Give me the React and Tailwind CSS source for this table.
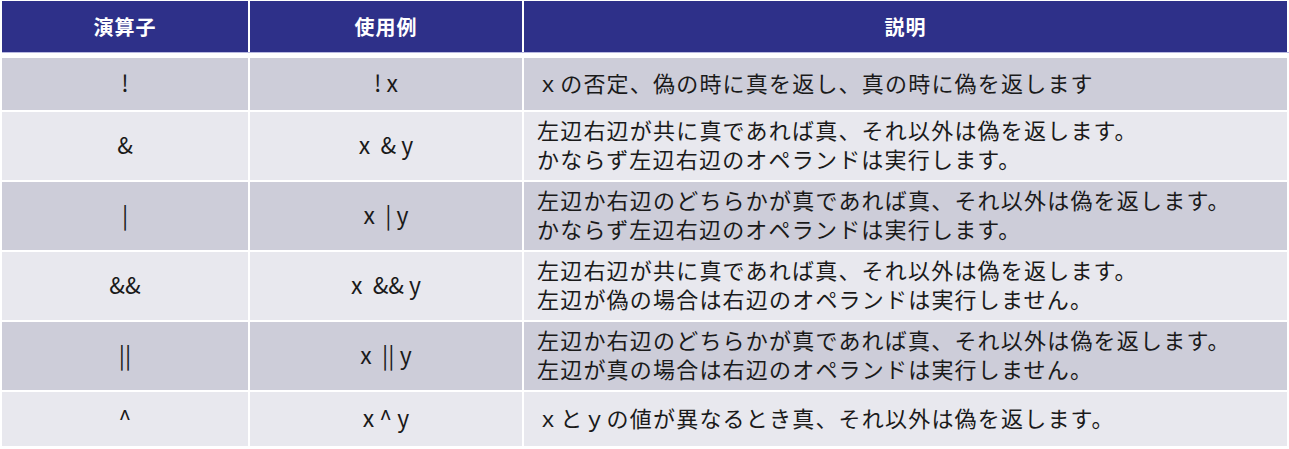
import React from "react";

const rows = [
  { op: "!", ex: "! x", desc: ["ｘの否定、偽の時に真を返し、真の時に偽を返します"], h: "h-[52px]" },
  {
    op: "&",
    ex: "x\u00a0\u00a0& y",
    desc: ["左辺右辺が共に真であれば真、それ以外は偽を返します。", "かならず左辺右辺のオペランドは実行します。"],
    h: "h-[68px]",
  },
  {
    op: "|",
    ex: "x\u00a0\u00a0| y",
    desc: ["左辺か右辺のどちらかが真であれば真、それ以外は偽を返します。", "かならず左辺右辺のオペランドは実行します。"],
    h: "h-[68px]",
  },
  {
    op: "&&",
    ex: "x\u00a0\u00a0&& y",
    desc: ["左辺右辺が共に真であれば真、それ以外は偽を返します。", "左辺が偽の場合は右辺のオペランドは実行しません。"],
    h: "h-[68px]",
  },
  {
    op: "||",
    ex: "x\u00a0\u00a0|| y",
    desc: ["左辺か右辺のどちらかが真であれば真、それ以外は偽を返します。", "左辺が真の場合は右辺のオペランドは実行しません。"],
    h: "h-[68px]",
  },
  { op: "^", ex: "x ^ y", desc: ["ｘとｙの値が異なるとき真、それ以外は偽を返します。"], h: "h-[54px]" },
];

export default function App() {
  return (
    <div
      className="w-[1289px] h-[449px] bg-white pt-[1px] pl-[2px] text-[#1a1a1a]"
      style={{ fontFamily: '"Noto Sans CJK JP", "Noto Sans", sans-serif' }}
    >
      <div className="grid grid-cols-[246px_272px_763px] gap-x-[2px] h-[52px] bg-white border-b border-[#b9b9e0] text-white font-bold text-[20px] tracking-[1px]">
        <div className="bg-[#2e3089] flex items-center justify-center">演算子</div>
        <div className="bg-[#2e3089] flex items-center justify-center">使用例</div>
        <div className="bg-[#2e3089] flex items-center justify-center">説明</div>
      </div>
      <div className="mt-[5px] flex flex-col gap-[2px]">
        {rows.map((r, i) => {
          const bg = i % 2 === 0 ? "bg-[#cdcdd9]" : "bg-[#e8e8ee]";
          return (
            <div key={i} className={`grid grid-cols-[246px_272px_763px] gap-x-[2px] ${r.h}`}>
              <div className={`${bg} flex items-center justify-center pb-[4px] text-[23px]`}>{r.op}</div>
              <div className={`${bg} flex items-center justify-center pb-[4px] text-[23px]`}>{r.ex}</div>
              <div className={`${bg} flex flex-col justify-center pl-[13px] pb-[4px] text-[22px] tracking-[1.2px] leading-[29px]`}>
                {r.desc.map((d, j) => (
                  <div key={j}>{d}</div>
                ))}
              </div>
            </div>
          );
        })}
      </div>
    </div>
  );
}
